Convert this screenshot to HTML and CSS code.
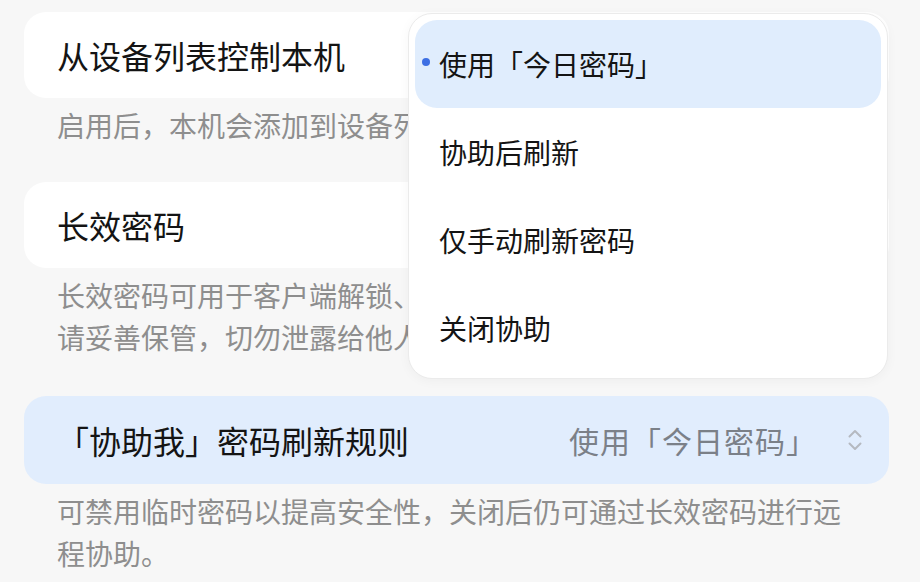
FILE: index.html
```html
<!DOCTYPE html>
<html lang="zh-CN">
<head>
    <meta charset="UTF-8">
    <meta name="viewport" content="width=device-width, initial-scale=1.0">
    <title>协助我 设置</title>
    <link rel="stylesheet" href="styles.css">
</head>
<body>
    <div class="page">
        <div class="card">
            <span class="card-title">从设备列表控制本机</span>
        </div>
        <p class="desc">启用后，本机会添加到设备列表中。</p>

        <div class="card">
            <span class="card-title">长效密码</span>
        </div>
        <p class="desc desc-gap">长效密码可用于客户端解锁、远程协助等，<br>请妥善保管，切勿泄露给他人。</p>

        <div class="card active">
            <span class="card-title">「协助我」密码刷新规则</span>
            <span class="card-value">使用「今日密码」</span>
            <svg class="chevron" width="16" height="24" viewBox="0 0 16 24">
                <path d="M2.5 8.5 L8 3 L13.5 8.5" fill="none" stroke="#b5b9c0" stroke-width="2" stroke-linecap="round" stroke-linejoin="round"/>
                <path d="M2.5 15.5 L8 21 L13.5 15.5" fill="none" stroke="#b5b9c0" stroke-width="2" stroke-linecap="round" stroke-linejoin="round"/>
            </svg>
        </div>
        <p class="desc">可禁用临时密码以提高安全性，关闭后仍可通过长效密码进行远程协助。</p>

        <!-- dropdown opened from the refresh rule row -->
        <div class="menu">
            <div class="menu-item selected"><span class="dot"></span>使用「今日密码」</div>
            <div class="menu-item"><span class="dot"></span>协助后刷新</div>
            <div class="menu-item"><span class="dot"></span>仅手动刷新密码</div>
            <div class="menu-item"><span class="dot"></span>关闭协助</div>
        </div>
    </div>
</body>
</html>
```

FILE: styles.css
```css
body {
    margin: 0;
    background-color: #f7f7f7;
    font-family: "Noto Sans CJK SC", "Noto Sans", sans-serif;
    color: #141414;
}
.page {
    position: relative;
    padding: 12px 31px 0 24px;
}
.card {
    display: flex;
    align-items: center;
    height: 86px;
    padding: 0 26px 0 33px;
    background-color: #fff;
    border-radius: 22px;
}
.card.active {
    height: 88px;
    background-color: #e1edfd;
}
.card-title {
    flex: 1;
    font-size: 32px;
}
.card-value {
    font-size: 30px;
    color: #7b8088;
    margin-right: 30px;
    letter-spacing: 1px;
}
.chevron {
    display: block;
}
.desc {
    margin: 0;
    padding: 6px 33px 36px;
    font-size: 28px;
    line-height: 42px;
    color: #8e8e8e;
}
.desc-gap {
    padding-bottom: 38px;
}
.menu {
    position: absolute;
    left: 408px;
    top: 13px;
    width: 466px;
    padding: 6px;
    background-color: #fff;
    border: 1px solid #ebebeb;
    border-radius: 24px;
    box-shadow: 0 2px 12px rgba(0, 0, 0, 0.04);
}
.menu-item {
    display: flex;
    align-items: center;
    gap: 9px;
    height: 88px;
    padding-left: 7px;
    font-size: 28px;
    color: #141414;
    border-radius: 22px;
}
.menu-item.selected {
    background-color: #e0edfd;
}
.dot {
    width: 8px;
    height: 8px;
    margin-top: -4px;
    border-radius: 50%;
    visibility: hidden;
}
.selected .dot {
    visibility: visible;
    background-color: #3d6fe3;
}
```
